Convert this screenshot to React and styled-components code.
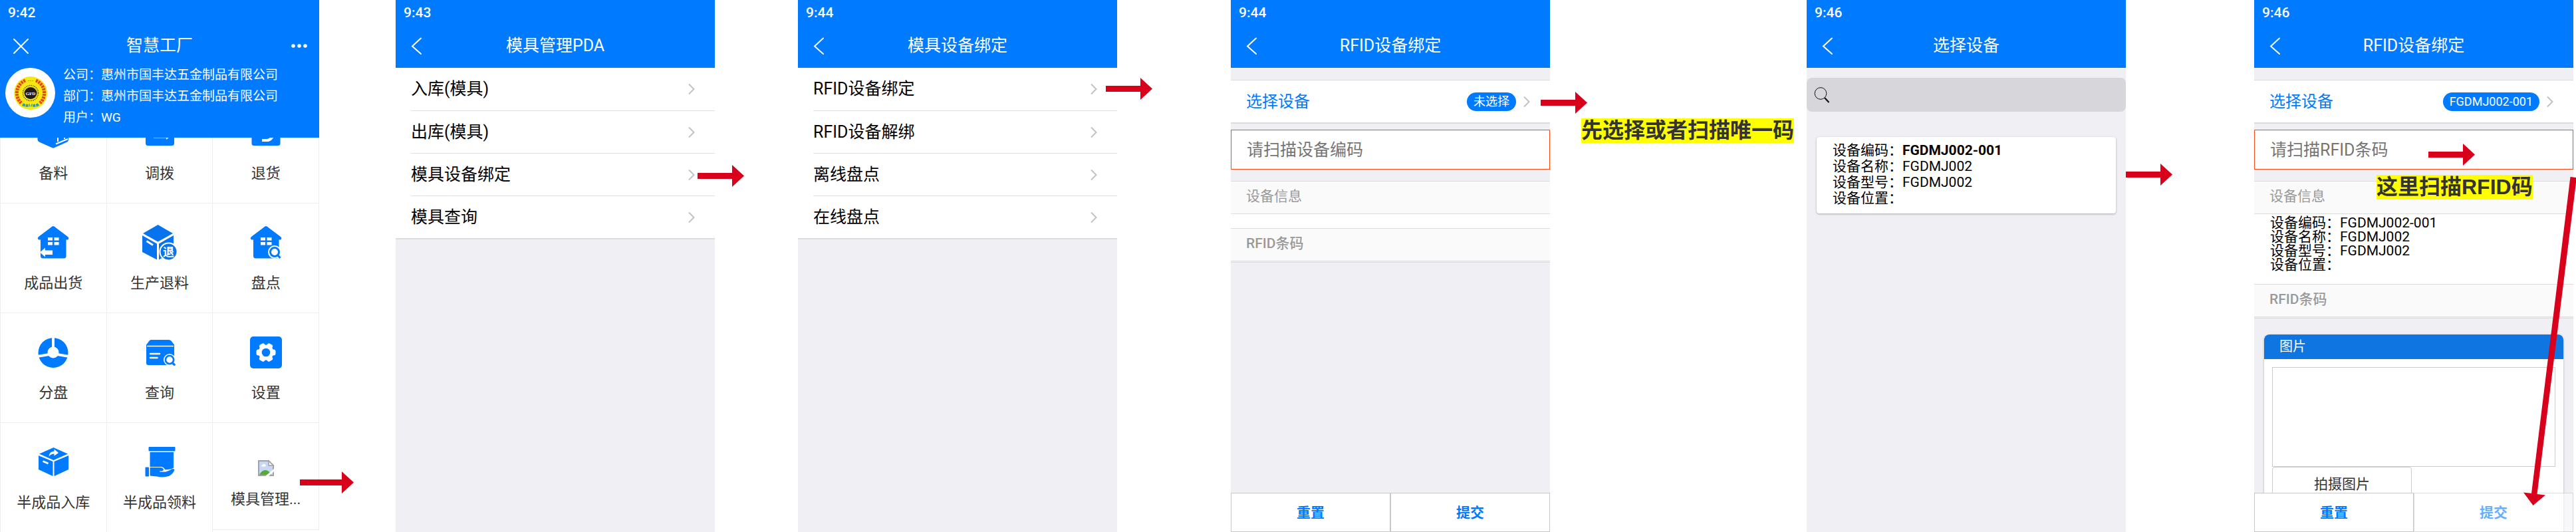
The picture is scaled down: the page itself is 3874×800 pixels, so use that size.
import React from 'react'
import styled, { createGlobalStyle, css } from 'styled-components';

const blue = '#007aff';
const grey = '#efeff4';

const GlobalStyle = createGlobalStyle`
* {
    box-sizing: border-box;
}
body {
    margin: 0;
    background: white;
    color: black;
    font-family: Roboto, "Noto Sans CJK SC", sans-serif;
}
button, input {
    font-family: inherit;
}
`;

/* ---------- icons ---------- */

const Svg = styled.svg`
display: block;
flex: none;
overflow: visible;
`;

const Icon = ({ size = 48, children }) => (
    <Svg width={size} height={size} viewBox={`0 0 ${size} ${size}`} fill={blue} aria-hidden="true">{children}</Svg>
);

const Chevron = () => (
    <Svg width="10" height="18" viewBox="0 0 10 18" fill="none" stroke="#c2c2c6" strokeWidth="2" aria-hidden="true">
        <path d="M1 1.5 8.5 9 1 16.5" />
    </Svg>
);

const BackIcon = () => (
    <Svg width="24" height="26" viewBox="0 0 24 26" fill="none" stroke="white" strokeWidth="2" strokeLinecap="round" aria-hidden="true">
        <path d="M20 1.5 7 13.5 20 25" />
    </Svg>
);

const CloseIcon = () => (
    <Svg width="24" height="24" viewBox="0 0 24 24" fill="none" stroke="white" strokeWidth="2" strokeLinecap="round" aria-hidden="true">
        <path d="M3 2 24 23M24 2 3 23" />
    </Svg>
);

const MoreIcon = () => (
    <Svg width="24" height="6" viewBox="0 0 24 6" fill="white" aria-hidden="true">
        <circle cx="3" cy="3" r="2.8" /><circle cx="12" cy="3" r="2.8" /><circle cx="21" cy="3" r="2.8" />
    </Svg>
);

const SearchIcon = () => (
    <Svg width="24" height="24" viewBox="0 0 24 24" fill="none" stroke="#111" aria-hidden="true">
        <circle cx="10" cy="9.5" r="8.8" strokeWidth="1" />
        <path d="M16 16 22.5 23" strokeWidth="2.2" />
    </Svg>
);

const StockIcon = () => (
    <Icon>
        <path d="M24 0 47 11V35Q47 37.500 45 38.500L26 47Q24 48 22 47L3 38.500Q.5 37.500 .5 35V11Z" />
        <path d="M28 41.500 46 34M31 38V22M41 34V20" stroke="white" strokeWidth="2" fill="none" />
    </Icon>
);

const TransferIcon = () => (
    <Icon>
        <rect x="3" y="3" width="43" height="41" rx="3.500" />
        <path d="M11 20H33M28 14l6 6M37 31H15" stroke="white" strokeWidth="3" fill="none" />
        <path d="M23 31H39L34 35V32H23Z" fill="white" />
    </Icon>
);

const ReturnIcon = () => (
    <Icon>
        <rect x="2.500" y="3" width="43" height="41" rx="3.500" />
        <path d="M14 17H25a9.500 9.500 0 0 1 0 19H18M20 10l-7 7 7 7" stroke="white" strokeWidth="4" fill="none" />
    </Icon>
);

const House = () => (
    <>
        <path d="M22.500 .6Q24 -.4 25.500 .6L46 16Q48 17.500 47 19.500Q45.500 21.500 43.500 20V45Q43.500 48.500 40 48.500H8.500Q5 48.500 5 45V20Q3 21.500 1 19.500Q0 17.500 2 16Z" />
        <path d="M16 17h7v4.500h-7zM25.500 17h7v4.500h-7zM16 24h7v4.500h-7zM25.500 24h7v4.500h-7z" fill="white" />
    </>
);

const Lens = ({ x, y }) => (
    <g transform={`translate(${x} ${y})`}>
        <circle r="10" fill="white" />
        <path d="M5 5 8.500 9" stroke="white" strokeWidth="6" />
        <circle r="6.500" fill="white" stroke={blue} strokeWidth="3" />
        <path d="M4.500 4.500 8.500 9" stroke={blue} strokeWidth="3" />
    </g>
);

const HouseOutIcon = () => (
    <Icon>
        <House />
        <path d="M4 39.500 12 32.500V36.500H23V43H12V46.500Z" fill="white" />
    </Icon>
);

const HouseCheckIcon = () => <Icon><House /><Lens x={37} y={39} /></Icon>;

const BoxReturnIcon = () => (
    <Icon>
        <g fill="#0773ee">
            <path d="M21.500 -2 44 11 21.500 23.500 -1 11Z" />
            <path d="M-2 14 20 26.500V50.500L-2 39Z" />
            <path d="M23 26.500 45 14V39L23 50.500Z" />
            <circle cx="37.500" cy="38.500" r="13" stroke="white" strokeWidth="2" />
        </g>
        <path d="M4.500 22.500 14 28.500" stroke="white" strokeWidth="3" />
        <text x="37.500" y="45" fontSize="17" fontWeight="700" textAnchor="middle" fill="white">退</text>
    </Icon>
);

const PieIcon = () => (
    <Icon>
        <circle cx="24" cy="25.500" r="22.500" />
        <circle cx="24" cy="25" r="8.500" fill="white" />
        <path d="M24 2V20" stroke="white" strokeWidth="4" />
        <path d="M0 29 18 26V30L0 33ZM48 29 30 26V30L48 33Z" fill="white" />
    </Icon>
);

const QueryIcon = () => (
    <Icon>
        <path d="M11 6H38Q40 6 41.500 7.500L46 13.500H4L8.500 7.500Q9.500 6 11 6Z" />
        <path d="M4 13H46V41Q46 44 43 44H7Q4 44 4 41Z" />
        <path d="M5 15.500H45" stroke="white" strokeWidth="1.500" />
        <path d="M10 27H24M10 33H20.500" stroke="white" strokeWidth="2.500" strokeLinecap="round" />
        <g transform="translate(39 36) scale(.9)">
            <circle r="10" fill="white" />
            <circle r="6.800" fill="white" stroke={blue} strokeWidth="3" />
            <path d="M4.500 4.500 9 9.500" stroke={blue} strokeWidth="3.500" />
        </g>
    </Icon>
);

const SettingsIcon = () => (
    <Icon>
        <rect y="1" width="48" height="48" rx="5" />
        <g transform="translate(24 25)" fill="white">
            <circle r="11.500" />
            {[0, 60, 120].map((a) => <rect key={a} x="-14.500" y="-4.500" width="29" height="9" rx="3" transform={`rotate(${a})`} />)}
            <circle r="6.300" fill={blue} />
        </g>
    </Icon>
);

const BoxInIcon = () => (
    <Icon>
        <path d="M24.500 3 46 12.500 24.500 22 3 12.500Z" />
        <path d="M2 15 23.500 24V46L2 36Z" />
        <path d="M25.500 24 47 15V36L25.500 46Z" />
        <path d="M8.500 23.500 16.500 27" stroke="white" strokeWidth="3" />
        <path d="M17.500 16.500Q18 9 25.500 8.500V5.500L32 11 25.500 15.500V12.500Q20.500 12.500 17.500 16.500Z" fill="white" />
    </Icon>
);

const HandIcon = () => (
    <Icon>
        <rect x="7.500" y="2" width="40" height="6.500" rx="1" />
        <path d="M9.500 10H45V38H9.500Z" />
        <path d="M8.500 32H27Q31 33 32 36Q40 37 47 32.500V50H8.500Z" fill="white" />
        <rect x="2.500" y="32.500" width="5.500" height="14" rx="1" />
        <path d="M9.500 33H25Q29.500 33 30 36.500Q29.500 38.500 24 38.500V39.500H33Q38 38.500 42 35.500Q45.500 34 46.500 36.500Q44 43 38 46Q29 48.500 20 46.500L9.500 45.500Z" />
    </Icon>
);

const BrokenImageIcon = () => (
    <Icon size={24}>
        <path d="M1 1H16L23 8V23H1Z" fill="#c6d8f5" stroke="#a3a3a3" strokeWidth="2" />
        <path d="M5 9.500Q5 7 7 7Q8 4.500 10 6Q12 6.500 11.500 9.500Z" fill="white" />
        <path d="M2 22Q6 14 12 15Q17 16 20 22Z" fill="#56ab38" />
        <path d="M16 1V8H23Z" fill="white" stroke="#a3a3a3" strokeWidth="1.500" />
        <path d="M11 24 24 13V17L16 24Z" fill="white" />
    </Icon>
);

const Logo = () => (
    <Svg width="52" height="52" viewBox="0 0 52 52" aria-label="GFD" role="img">
        <circle cx="26" cy="26" r="25" fill="#f7e713" />
        <g fill="none" strokeWidth="5">
            <path d="M18 7A20.500 20.500 0 0 0 12 41" stroke="#e8402a" strokeDasharray="3 1.200" />
            <path d="M34 7A20.500 20.500 0 0 1 40 41" stroke="#e8402a" strokeDasharray="3 1.200" />
            <path d="M14 43Q19 46 25 44M38 43Q33 46 27 44" stroke="#2f9cae" strokeWidth="4" strokeDasharray="4 1" />
        </g>
        <path d="M22 7.500H30" stroke="#d08a20" strokeDasharray="2 1" />
        <circle cx="26" cy="26" r="11.500" fill="none" stroke="#4a4216" strokeWidth="1.500" strokeDasharray="1.200 1.400" />
        <ellipse cx="26" cy="26" rx="9.500" ry="9" fill="#231a1c" />
        <text x="26" y="28.500" fontSize="7" fontWeight="700" fontFamily="Liberation Serif, serif" textAnchor="middle" fill="white">GFD</text>
    </Svg>
);

/* ---------- annotations ---------- */

const ArrowSvg = styled.svg`
position: absolute;
z-index: 3;
left: ${(p) => p.$x}px;
top: ${(p) => p.$y}px;
fill: #d9001b;
`;

const Arrow = ({ x, y, length = 70 }) => (
    <ArrowSvg $x={x} $y={y} width={length} height="33" viewBox={`0 0 ${length} 33`} aria-hidden="true">
        <path d={`M0 12H${length - 18}V0L${length} 16.500 ${length - 18} 33V21H0Z`} />
    </ArrowSvg>
);

const LongArrow = () => (
    <ArrowSvg $x={400} $y={266} width="84" height="494" viewBox="0 0 84 494" aria-hidden="true">
        <path d="M75.500 0 84 1V9L25.500 477 38 478.500 19.500 494 5 474.500 17 476Z" />
    </ArrowSvg>
);

const Note = styled.strong`
position: absolute;
z-index: 2;
left: ${(p) => p.$x}px;
top: ${(p) => p.$y}px;
background: yellow;
color: #333;
font: bold 32px/37px "Liberation Sans", "Noto Sans CJK SC", sans-serif;
white-space: nowrap;
`;

/* ---------- shared parts ---------- */

const Board = styled.main`
display: grid;
grid-template-columns: 480fr 115fr 480fr 125fr 480fr 171fr 480fr 386fr 480fr 193fr 480fr 4fr;
min-height: 100vh;
overflow: hidden;
`;

const Screen = styled.section`
position: relative;
display: flex;
flex-direction: column;
grid-column: ${(p) => p.$column};
background: ${(p) => p.$bg || grey};
`;

const Header = styled.header`
position: relative;
z-index: 1;
background: ${blue};
color: white;
`;

const Status = styled.div`
height: 36px;
padding-left: 12px;
font-size: 21px;
font-weight: 500;
line-height: 38px;
`;

const TitleBar = styled.div`
display: grid;
grid-template-columns: 60px 1fr 60px;
align-items: center;
height: 66px;
`;

const Title = styled.h1`
margin: 0;
font-size: 25px;
font-weight: 400;
line-height: 36px;
text-align: center;
`;

const BarButton = styled.button`
display: flex;
justify-content: center;
padding: 0;
border: 0;
background: none;
`;

const TopBar = ({ time, title, children }) => (
    <Header>
        <Status>{time}</Status>
        <TitleBar>
            <BarButton aria-label="返回"><BackIcon /></BarButton>
            <Title>{title}</Title>
        </TitleBar>
        {children}
    </Header>
);

/* ---------- home ---------- */

const Company = styled.div`
display: flex;
gap: 12px;
height: 105px;
padding-left: 8px;
`;

const Avatar = styled.div`
display: flex;
align-items: center;
justify-content: center;
width: 75px;
height: 75px;
border-radius: 50%;
background: white;
`;

const CompanyText = styled.div`
margin-top: -5px;
font-size: 19px;
line-height: 32px;
`;

const Scroll = styled.div`
flex: 1 0 0;
overflow: hidden;
`;

/* scrolled down, the first row slides under the header */
const AppGrid = styled.nav`
display: grid;
grid-template-columns: repeat(3, 1fr);
align-items: start;
margin-top: -66px;
border-left: 1px solid #eee;
`;

const AppLink = styled.a`
display: flex;
flex-direction: column;
align-items: center;
gap: 23px;
height: 165px;
padding-top: 34px;
border: solid #eee;
border-width: 0 1px 1px 0;
color: #333;
font-size: 22px;
line-height: 30px;
text-decoration: none;
${(p) => p.$broken && css`
height: 161px;
padding-top: 56px;
gap: 20px;
`}
`;

const apps = [
    ['备料', StockIcon],
    ['调拨', TransferIcon],
    ['退货', ReturnIcon],
    ['成品出货', HouseOutIcon],
    ['生产退料', BoxReturnIcon],
    ['盘点', HouseCheckIcon],
    ['分盘', PieIcon],
    ['查询', QueryIcon],
    ['设置', SettingsIcon],
    ['半成品入库', BoxInIcon],
    ['半成品领料', HandIcon],
    ['模具管理...', BrokenImageIcon],
];

const Home = () => (
    <Screen $column={1} $bg="white">
        <Header>
            <Status>9:42</Status>
            <TitleBar>
                <BarButton aria-label="关闭"><CloseIcon /></BarButton>
                <Title>智慧工厂</Title>
                <BarButton aria-label="更多"><MoreIcon /></BarButton>
            </TitleBar>
            <Company>
                <Avatar><Logo /></Avatar>
                <CompanyText>
                    <div>公司：惠州市国丰达五金制品有限公司</div>
                    <div>部门：惠州市国丰达五金制品有限公司</div>
                    <div>用户：WG</div>
                </CompanyText>
            </Company>
        </Header>
        <Scroll>
            <AppGrid>
                {apps.map(([name, AppIcon]) => (
                    <AppLink href="#" key={name} $broken={AppIcon === BrokenImageIcon}><AppIcon />{name}</AppLink>
                ))}
            </AppGrid>
        </Scroll>
        <Arrow x={451} y={709} length={81} />
    </Screen>
);

/* ---------- menus ---------- */

const Menu = styled.ul`
margin: 0;
padding: 0 0 0 23px;
list-style: none;
background: white;
border-bottom: 2px solid #dcdce1;
`;

const MenuLink = styled.a`
display: flex;
align-items: center;
justify-content: space-between;
height: 64px;
padding-right: 30px;
color: black;
font-size: 25px;
line-height: 36px;
text-decoration: none;
li + li > & {
    border-top: 1px solid #e0e0e2;
}
`;

const MenuList = ({ items }) => (
    <Menu>
        {items.map((item) => (
            <li key={item}><MenuLink href="#">{item}<Chevron /></MenuLink></li>
        ))}
    </Menu>
);

/* ---------- binding form ---------- */

const PickRow = styled.a`
display: flex;
align-items: center;
gap: 11px;
height: 66px;
margin-top: 18px;
padding: 0 30px 0 23px;
border: solid #dcdce0;
border-width: 1px 0 2px;
background: white;
color: ${blue};
font-size: 24px;
line-height: 36px;
text-decoration: none;
`;

const Badge = styled.span`
margin-left: auto;
padding: 0 10px;
border-radius: 14px;
background: ${blue};
color: white;
font-size: 18px;
line-height: 28px;
`;

const ScanInput = styled.input`
width: 100%;
height: 60px;
margin: 9px 0 17px;
padding: 0 23px;
border: 1px solid #ff4a12;
border-radius: 0;
background: white;
font-size: 25px;
&::placeholder {
    color: #757575;
    opacity: 1;
}
`;

const SectionTitle = styled.h2`
margin: 0;
height: 50px;
padding-left: 23px;
border: solid #dcdcde;
border-width: 1px 0;
background: #fafafa;
color: #999;
font-size: 21px;
font-weight: ${(p) => p.$weight || 400};
line-height: 44px;
`;

const DeviceInfo = styled.div`
min-height: 21px;
background: white;
font-size: 21px;
line-height: 21px;
${(p) => p.$filled && css`
padding: 3px 24px 18px;
`}
`;

const FormEnd = styled.div`
height: 2px;
border-bottom: 1px solid #dcdcde;
`;

const Footer = styled.footer`
position: absolute;
z-index: 1;
left: 0;
right: 0;
bottom: 0;
display: grid;
grid-template-columns: 1fr 1fr;
`;

const FootButton = styled.button`
height: 59px;
padding: 0 0 4px;
border: 1px solid #c8c8cc;
background: white;
color: ${blue};
font-size: 21px;
font-weight: 700;
&:disabled {
    opacity: .6;
}
`;

const FormFooter = ({ busy }) => (
    <Footer>
        <FootButton>重置</FootButton>
        <FootButton disabled={busy}>提交</FootButton>
    </Footer>
);

/* ---------- device search ---------- */

const SearchBox = styled.label`
display: flex;
align-items: center;
gap: 8px;
height: 51px;
margin-top: 15px;
padding: 0 11px;
border-radius: 8px;
background: #d7d6db;
`;

const SearchInput = styled.input`
flex: 1;
min-width: 0;
border: 0;
outline: 0;
background: none;
font-size: 21px;
`;

const DeviceCard = styled.a`
display: block;
margin: 38px 15px 0;
padding: 8px 24px 11px;
border-radius: 4px;
background: white;
box-shadow: 0 1px 3px rgba(0, 0, 0, .3);
color: black;
font-size: 21px;
line-height: 24px;
text-decoration: none;
`;

/* ---------- photo card ---------- */

const PhotoCard = styled.div`
display: flex;
flex: 1;
flex-direction: column;
align-items: flex-start;
margin: 24px 15px 0;
border-radius: 8px 8px 0 0;
background: white;
box-shadow: 0 1px 3px rgba(0, 0, 0, .3);
`;

const PhotoTitle = styled.h2`
align-self: stretch;
margin: 0;
padding-left: 23px;
border-radius: 8px 8px 0 0;
background: #0f75e0;
color: white;
font-size: 20px;
font-weight: 400;
line-height: 37px;
`;

const PhotoFrame = styled.div`
align-self: stretch;
height: 150px;
margin: 12px 12px 0;
border: 1px solid #ccc;
`;

const PhotoButton = styled.button`
width: 210px;
height: 47px;
margin-left: 12px;
border: 1px solid #ccc;
border-radius: 4px;
background: white;
color: #333;
font-size: 21px;
`;

export default function App() {
    return (
        <Board>
            <GlobalStyle />
            <Home />
            <Screen $column={3}>
                <TopBar time="9:43" title="模具管理PDA" />
                <MenuList items={['入库(模具)', '出库(模具)', '模具设备绑定', '模具查询']} />
                <Arrow x={454} y={248} />
            </Screen>
            <Screen $column={5}>
                <TopBar time="9:44" title="模具设备绑定" />
                <MenuList items={['RFID设备绑定', 'RFID设备解绑', '离线盘点', '在线盘点']} />
                <Arrow x={463} y={117} />
            </Screen>
            <Screen $column={7}>
                <TopBar time="9:44" title="RFID设备绑定" />
                <PickRow href="#">选择设备<Badge>未选择</Badge><Chevron /></PickRow>
                <ScanInput aria-label="设备编码" placeholder="请扫描设备编码" />
                <SectionTitle>设备信息</SectionTitle>
                <DeviceInfo />
                <SectionTitle $weight={500}>RFID条码</SectionTitle>
                <FormEnd />
                <FormFooter />
                <Arrow x={466} y={138} />
                <Note $x={527} $y={178}>先选择或者扫描唯一码</Note>
            </Screen>
            <Screen $column={9}>
                <TopBar time="9:46" title="选择设备" />
                <SearchBox><SearchIcon /><SearchInput type="search" aria-label="搜索设备" /></SearchBox>
                <DeviceCard href="#">
                    <div>设备编码：<b>FGDMJ002-001</b></div>
                    <div>设备名称：FGDMJ002</div>
                    <div>设备型号：FGDMJ002</div>
                    <div>设备位置：</div>
                </DeviceCard>
                <Arrow x={480} y={246} />
            </Screen>
            <Screen $column={11}>
                <TopBar time="9:46" title="RFID设备绑定" />
                <PickRow href="#">选择设备<Badge>FGDMJ002-001</Badge><Chevron /></PickRow>
                <ScanInput aria-label="RFID条码" placeholder="请扫描RFID条码" />
                <SectionTitle>设备信息</SectionTitle>
                <DeviceInfo $filled>
                    <div>设备编码：FGDMJ002-001</div>
                    <div>设备名称：FGDMJ002</div>
                    <div>设备型号：FGDMJ002</div>
                    <div>设备位置：</div>
                </DeviceInfo>
                <SectionTitle $weight={500}>RFID条码</SectionTitle>
                <FormEnd />
                <PhotoCard>
                    <PhotoTitle>图片</PhotoTitle>
                    <PhotoFrame />
                    <PhotoButton>拍摄图片</PhotoButton>
                </PhotoCard>
                <FormFooter busy />
                <Arrow x={262} y={216} />
                <Note $x={184} $y={263}>这里扫描RFID码</Note>
                <LongArrow />
            </Screen>
        </Board>
    )
}
